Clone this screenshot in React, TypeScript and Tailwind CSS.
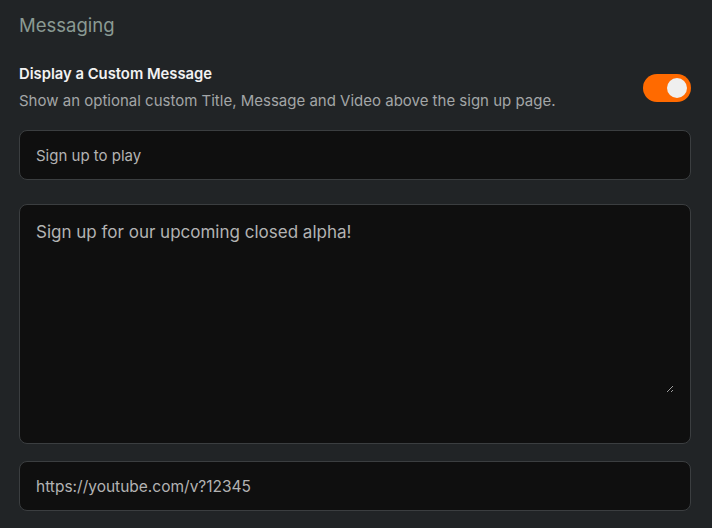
export default function App() {
  return (
    <div
      className="w-[712px] h-[528px] bg-[#212426] pl-[19px] pr-[21px] pt-[11px] overflow-hidden"
      style={{ fontFamily: 'Inter, "Noto Sans", sans-serif' }}
    >
      {/* Section heading */}
      <h2 className="text-[18.5px] leading-[28px] text-[#8a9a93]">Messaging</h2>

      {/* Toggle row */}
      <div className="mt-[25px] flex items-center justify-between">
        <div>
          <p className="text-[14.8px] leading-[20px] font-semibold text-[#f2f2f2]">
            Display a Custom Message
          </p>
          <p className="mt-[7px] text-[15px] leading-[20px] text-[#a3a6a7]">
            Show an optional custom Title, Message and Video above the sign up page.
          </p>
        </div>
        <button className="mt-[1px] flex h-[28px] w-[48px] items-center justify-end rounded-full bg-[#ff6a00] px-[4px]">
          <span className="h-[20px] w-[20px] rounded-full bg-[#efefef]" />
        </button>
      </div>

      {/* Title input */}
      <input
        readOnly
        defaultValue="Sign up to play"
        className="mt-[19px] block h-[50px] w-full rounded-[8px] border border-[#3b3e40] bg-[#0f0f0f] px-[16px] text-[15px] text-[#b3b3b3] outline-none"
      />

      {/* Message textarea */}
      <div className="mt-[24px] h-[240px] rounded-[8px] border border-[#3b3e40] bg-[#0f0f0f] px-[16px] pt-[14px]">
        <textarea
          readOnly
          defaultValue="Sign up for our upcoming closed alpha!"
          className="block h-[174px] w-full resize-y bg-transparent text-[17px] leading-[26px] text-[#b3b3b3] outline-none"
        />
      </div>

      {/* Video URL input */}
      <input
        readOnly
        defaultValue="https://youtube.com/v?12345"
        className="mt-[17px] block h-[50px] w-full rounded-[8px] border border-[#3b3e40] bg-[#0f0f0f] px-[16px] text-[15.5px] text-[#b3b3b3] outline-none"
      />
    </div>
  )
}
